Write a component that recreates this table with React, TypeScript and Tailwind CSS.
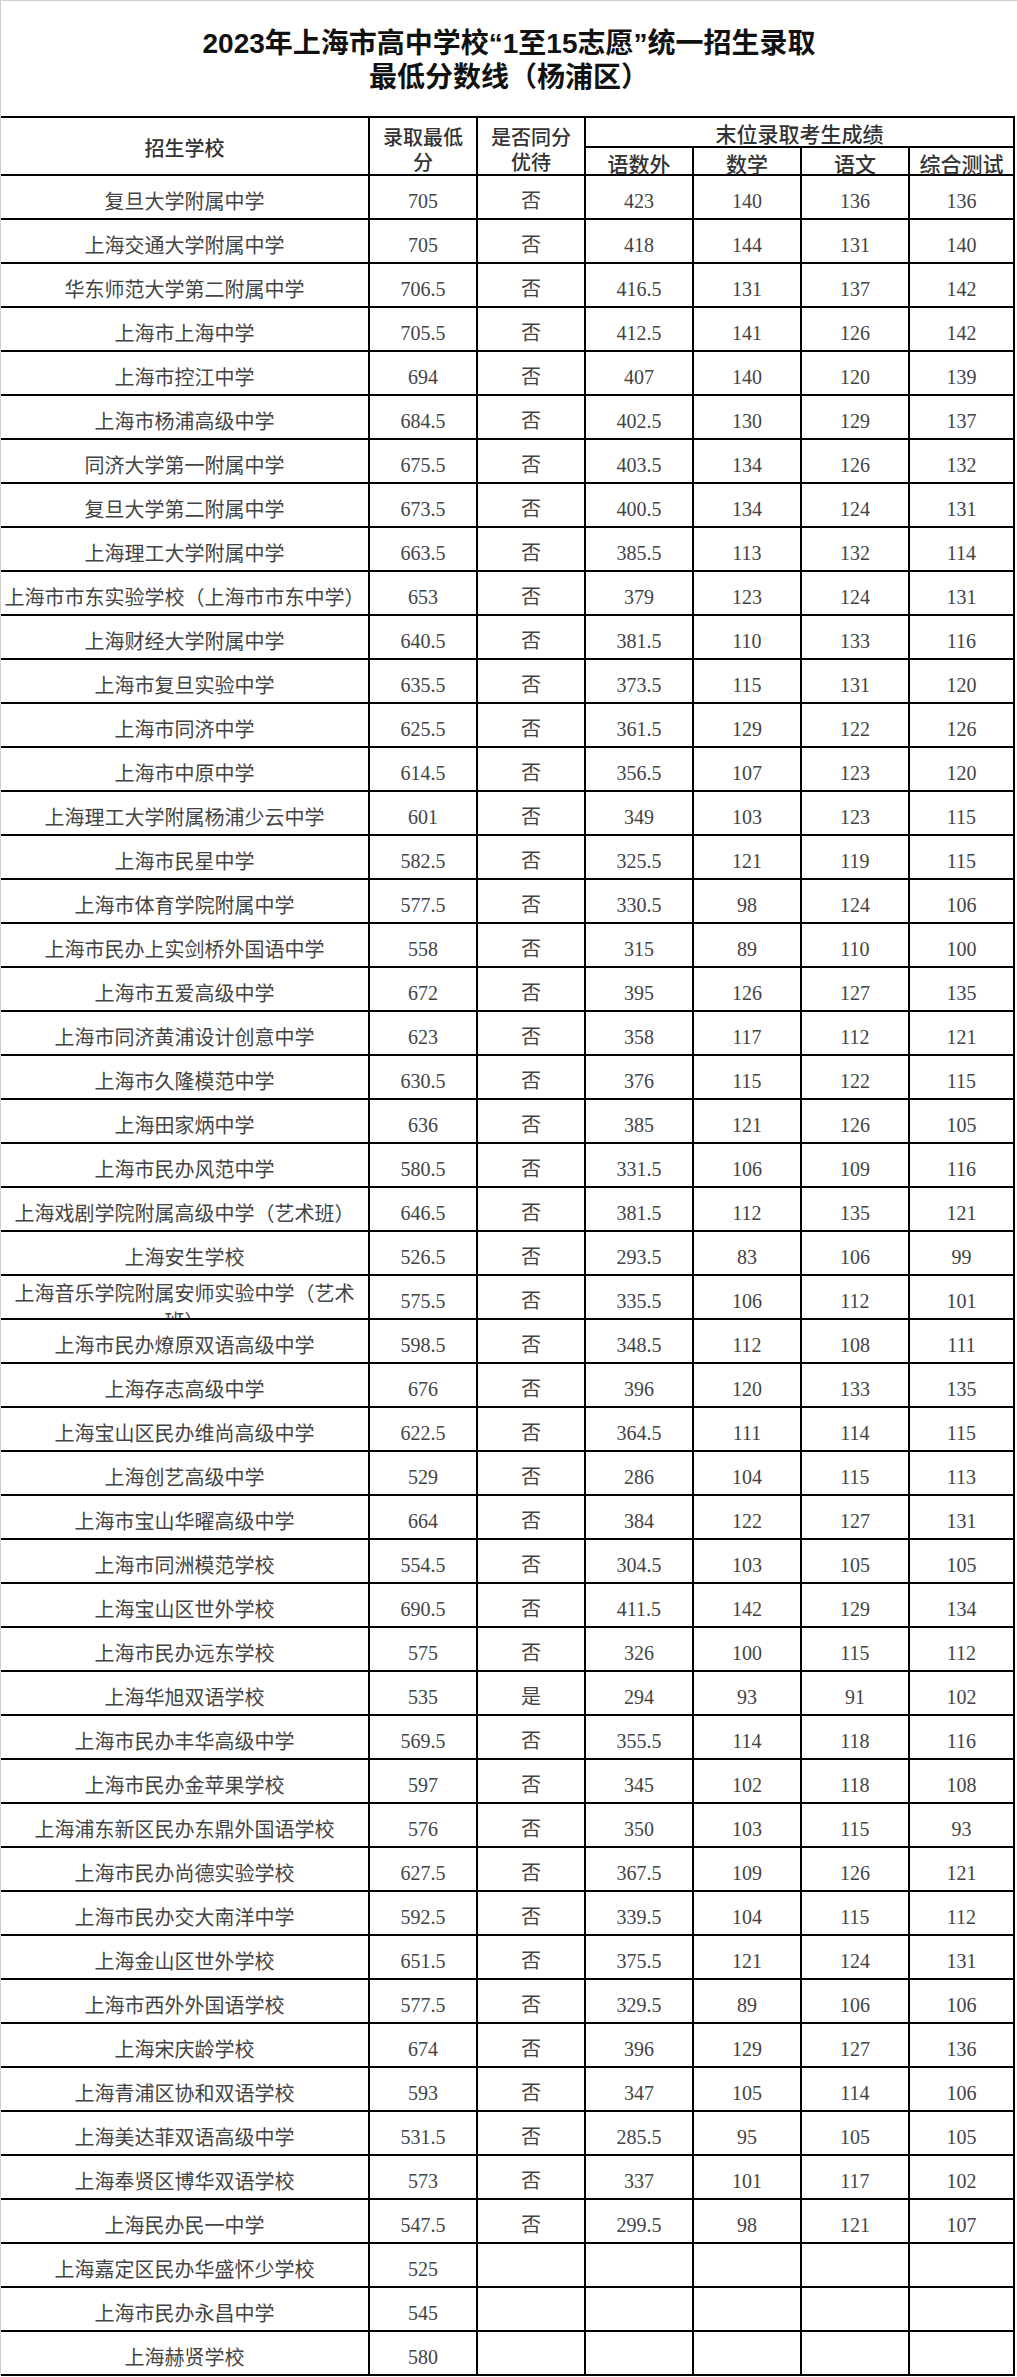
import React from "react";

const rows: string[][] = [
  ["复旦大学附属中学", "705", "否", "423", "140", "136", "136"],
  ["上海交通大学附属中学", "705", "否", "418", "144", "131", "140"],
  ["华东师范大学第二附属中学", "706.5", "否", "416.5", "131", "137", "142"],
  ["上海市上海中学", "705.5", "否", "412.5", "141", "126", "142"],
  ["上海市控江中学", "694", "否", "407", "140", "120", "139"],
  ["上海市杨浦高级中学", "684.5", "否", "402.5", "130", "129", "137"],
  ["同济大学第一附属中学", "675.5", "否", "403.5", "134", "126", "132"],
  ["复旦大学第二附属中学", "673.5", "否", "400.5", "134", "124", "131"],
  ["上海理工大学附属中学", "663.5", "否", "385.5", "113", "132", "114"],
  ["上海市市东实验学校（上海市市东中学）", "653", "否", "379", "123", "124", "131"],
  ["上海财经大学附属中学", "640.5", "否", "381.5", "110", "133", "116"],
  ["上海市复旦实验中学", "635.5", "否", "373.5", "115", "131", "120"],
  ["上海市同济中学", "625.5", "否", "361.5", "129", "122", "126"],
  ["上海市中原中学", "614.5", "否", "356.5", "107", "123", "120"],
  ["上海理工大学附属杨浦少云中学", "601", "否", "349", "103", "123", "115"],
  ["上海市民星中学", "582.5", "否", "325.5", "121", "119", "115"],
  ["上海市体育学院附属中学", "577.5", "否", "330.5", "98", "124", "106"],
  ["上海市民办上实剑桥外国语中学", "558", "否", "315", "89", "110", "100"],
  ["上海市五爱高级中学", "672", "否", "395", "126", "127", "135"],
  ["上海市同济黄浦设计创意中学", "623", "否", "358", "117", "112", "121"],
  ["上海市久隆模范中学", "630.5", "否", "376", "115", "122", "115"],
  ["上海田家炳中学", "636", "否", "385", "121", "126", "105"],
  ["上海市民办风范中学", "580.5", "否", "331.5", "106", "109", "116"],
  ["上海戏剧学院附属高级中学（艺术班）", "646.5", "否", "381.5", "112", "135", "121"],
  ["上海安生学校", "526.5", "否", "293.5", "83", "106", "99"],
  ["上海音乐学院附属安师实验中学（艺术班）", "575.5", "否", "335.5", "106", "112", "101"],
  ["上海市民办燎原双语高级中学", "598.5", "否", "348.5", "112", "108", "111"],
  ["上海存志高级中学", "676", "否", "396", "120", "133", "135"],
  ["上海宝山区民办维尚高级中学", "622.5", "否", "364.5", "111", "114", "115"],
  ["上海创艺高级中学", "529", "否", "286", "104", "115", "113"],
  ["上海市宝山华曜高级中学", "664", "否", "384", "122", "127", "131"],
  ["上海市同洲模范学校", "554.5", "否", "304.5", "103", "105", "105"],
  ["上海宝山区世外学校", "690.5", "否", "411.5", "142", "129", "134"],
  ["上海市民办远东学校", "575", "否", "326", "100", "115", "112"],
  ["上海华旭双语学校", "535", "是", "294", "93", "91", "102"],
  ["上海市民办丰华高级中学", "569.5", "否", "355.5", "114", "118", "116"],
  ["上海市民办金苹果学校", "597", "否", "345", "102", "118", "108"],
  ["上海浦东新区民办东鼎外国语学校", "576", "否", "350", "103", "115", "93"],
  ["上海市民办尚德实验学校", "627.5", "否", "367.5", "109", "126", "121"],
  ["上海市民办交大南洋中学", "592.5", "否", "339.5", "104", "115", "112"],
  ["上海金山区世外学校", "651.5", "否", "375.5", "121", "124", "131"],
  ["上海市西外外国语学校", "577.5", "否", "329.5", "89", "106", "106"],
  ["上海宋庆龄学校", "674", "否", "396", "129", "127", "136"],
  ["上海青浦区协和双语学校", "593", "否", "347", "105", "114", "106"],
  ["上海美达菲双语高级中学", "531.5", "否", "285.5", "95", "105", "105"],
  ["上海奉贤区博华双语学校", "573", "否", "337", "101", "117", "102"],
  ["上海民办民一中学", "547.5", "否", "299.5", "98", "121", "107"],
  ["上海嘉定区民办华盛怀少学校", "525", "", "", "", "", ""],
  ["上海市民办永昌中学", "545", "", "", "", "", ""],
  ["上海赫贤学校", "580", "", "", "", "", ""],
];

const gridCols =
  "grid grid-cols-[369px_108px_108px_108px_108px_108px_105px]";

function HeadCell({
  children,
  className = "",
}: {
  children: React.ReactNode;
  className?: string;
}) {
  return (
    <div
      className={
        "flex items-center justify-center border-r-2 border-b-2 border-black text-center text-[20px] font-medium text-[#333] font-['Noto_Sans_CJK_SC',sans-serif] " +
        className
      }
    >
      {children}
    </div>
  );
}

function Row({ r }: { r: string[] }) {
  const wrap = r[0].length > 18;
  return (
    <div className={gridCols + " h-[44px]"}>
      <div
        className={
          "flex justify-center overflow-hidden border-r-2 border-b-2 border-black text-center text-[20px] text-[#444] font-['Noto_Sans_CJK_SC',sans-serif] " +
          (wrap ? "items-start pt-[3px] leading-[28px]" : "items-center pt-[8px] leading-[28px]")
        }
      >
        <span>{r[0]}</span>
      </div>
      {r.slice(1).map((v, i) => (
        <div
          key={i}
          className="flex items-center justify-center pt-[8px] border-r-2 border-b-2 border-black text-center text-[20px] leading-[28px] text-[#444] font-['Liberation_Serif','Noto_Sans_CJK_SC',serif]"
        >
          {v}
        </div>
      ))}
    </div>
  );
}

export default function App() {
  return (
    <div className="w-[1017px] bg-white border-t border-l border-[#cfcfcf]">
      <div className="h-[115px] pt-[26px] text-center text-[28px] leading-[34px] font-bold text-[#111] font-['Liberation_Sans','Noto_Sans_CJK_SC',sans-serif]">
        <div>2023年上海市高中学校“1至15志愿”统一招生录取</div>
        <div>最低分数线（杨浦区）</div>
      </div>
      <div className="w-[1014px] border-t-2 border-black">
        <div className={gridCols + " grid-rows-[30px_28px]"}>
          <HeadCell className="row-span-2 pt-[4px]">招生学校</HeadCell>
          <HeadCell className="row-span-2 flex-col pt-[6px] leading-[25px]">
            <span>录取最低</span>
            <span>分</span>
          </HeadCell>
          <HeadCell className="row-span-2 flex-col pt-[6px] leading-[25px]">
            <span>是否同分</span>
            <span>优待</span>
          </HeadCell>
          <HeadCell className="col-span-4 pt-[4px] text-[21px]">末位录取考生成绩</HeadCell>
          <HeadCell className="pt-[6px] text-[21px]">语数外</HeadCell>
          <HeadCell className="pt-[6px] text-[21px]">数学</HeadCell>
          <HeadCell className="pt-[6px] text-[21px]">语文</HeadCell>
          <HeadCell className="pt-[6px] text-[21px]">综合测试</HeadCell>
        </div>
        {rows.map((r, i) => (
          <Row key={i} r={r} />
        ))}
      </div>
    </div>
  );
}
